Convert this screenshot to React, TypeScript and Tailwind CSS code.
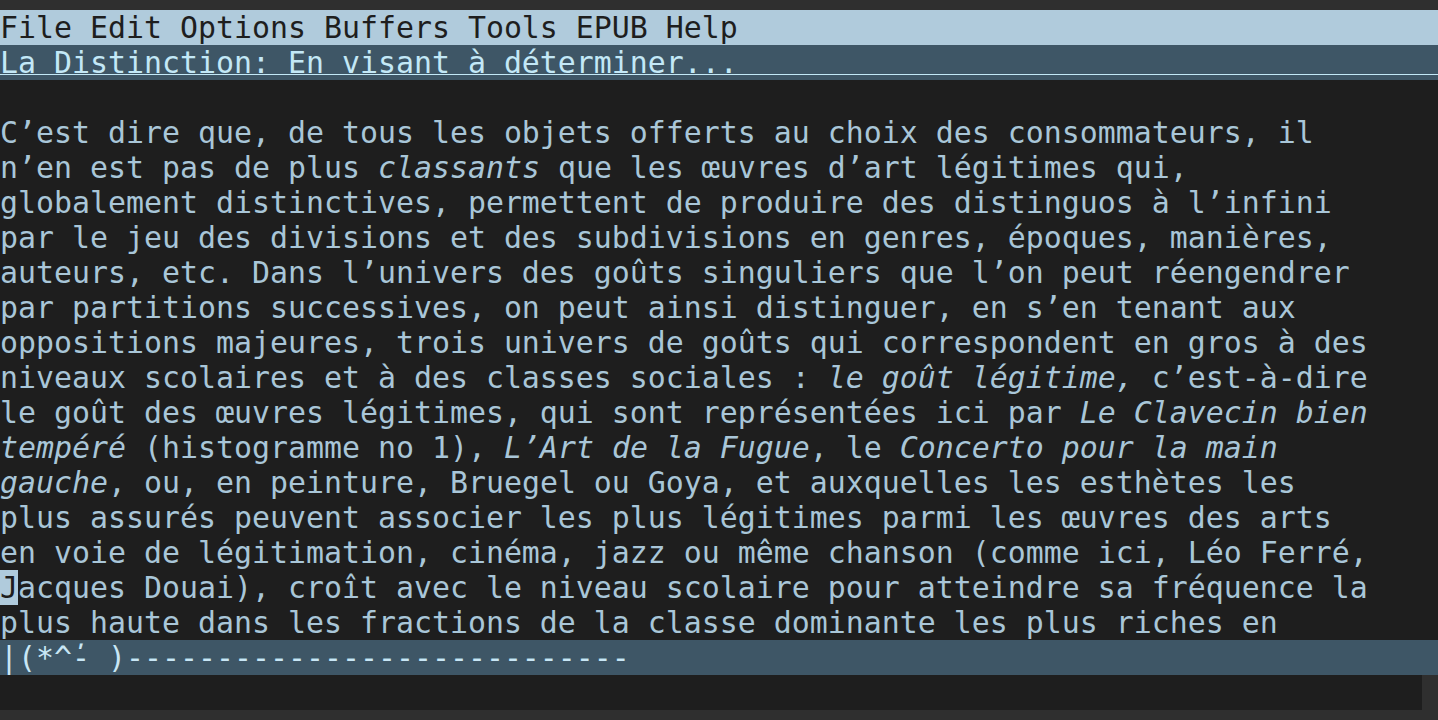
import React from 'react';

type Seg = { t: string; i?: boolean };

const lines: Seg[][] = [
  [{ t: 'C’est dire que, de tous les objets offerts au choix des consommateurs, il' }],
  [{ t: 'n’en est pas de plus ' }, { t: 'classants', i: true }, { t: ' que les œuvres d’art légitimes qui,' }],
  [{ t: 'globalement distinctives, permettent de produire des distinguos à l’infini' }],
  [{ t: 'par le jeu des divisions et des subdivisions en genres, époques, manières,' }],
  [{ t: 'auteurs, etc. Dans l’univers des goûts singuliers que l’on peut réengendrer' }],
  [{ t: 'par partitions successives, on peut ainsi distinguer, en s’en tenant aux' }],
  [{ t: 'oppositions majeures, trois univers de goûts qui correspondent en gros à des' }],
  [{ t: 'niveaux scolaires et à des classes sociales : ' }, { t: 'le goût légitime,', i: true }, { t: ' c’est-à-dire' }],
  [{ t: 'le goût des œuvres légitimes, qui sont représentées ici par ' }, { t: 'Le Clavecin bien', i: true }],
  [
    { t: 'tempéré', i: true },
    { t: ' (histogramme no 1), ' },
    { t: 'L’Art de la Fugue', i: true },
    { t: ', le ' },
    { t: 'Concerto pour la main', i: true },
  ],
  [{ t: 'gauche', i: true }, { t: ', ou, en peinture, Bruegel ou Goya, et auxquelles les esthètes les' }],
  [{ t: 'plus assurés peuvent associer les plus légitimes parmi les œuvres des arts' }],
  [{ t: 'en voie de légitimation, cinéma, jazz ou même chanson (comme ici, Léo Ferré,' }],
  [{ t: 'acques Douai), croît avec le niveau scolaire pour atteindre sa fréquence la' }],
  [{ t: 'plus haute dans les fractions de la classe dominante les plus riches en' }],
];

const mono = { fontFamily: '"DejaVu Sans Mono", "Liberation Mono", monospace' };

export default function App() {
  return (
    <div
      className="w-[1438px] h-[720px] flex flex-col bg-[#2f2f2f] text-[29.9px] leading-[35px] overflow-hidden"
      style={mono}
    >
      <div className="h-[10px] shrink-0" />

      {/* menu bar */}
      <div className="h-[35px] shrink-0 bg-[#b0cbdc] text-[#1e1e1e] whitespace-pre">
        File Edit Options Buffers Tools EPUB Help
      </div>

      {/* header line, underline runs the full width */}
      <div className="h-[35px] shrink-0 bg-[#3e5666] pb-[5px]">
        <div className="h-[30px] border-b border-[#c3e8f6] text-[#c3e8f6] whitespace-pre">
          La Distinction: En visant à déterminer...
        </div>
      </div>

      {/* buffer */}
      <div className="h-[560px] shrink-0 bg-[#1e1e1e] text-[#a9c6d8] pt-[35px]">
        {lines.map((segs, n) => (
          <div key={n} className="h-[35px] whitespace-pre">
            {n === 13 && <span className="bg-[#b0cbdc] text-[#1e1e1e]">J</span>}
            {segs.map((s, k) => (
              <span key={k} className={s.i ? 'italic' : ''}>
                {s.t}
              </span>
            ))}
          </div>
        ))}
      </div>

      {/* mode line */}
      <div className="h-[35px] shrink-0 bg-[#3e5666] text-[#c8e6f5] whitespace-pre">
        {'|(*^\u0315- )----------------------------'}
      </div>

      {/* echo area */}
      <div className="h-[35px] shrink-0 flex">
        <div className="flex-1 bg-[#1e1e1e]" />
        <div className="w-[16px]" />
      </div>

      <div className="h-[10px] shrink-0" />
    </div>
  );
}
